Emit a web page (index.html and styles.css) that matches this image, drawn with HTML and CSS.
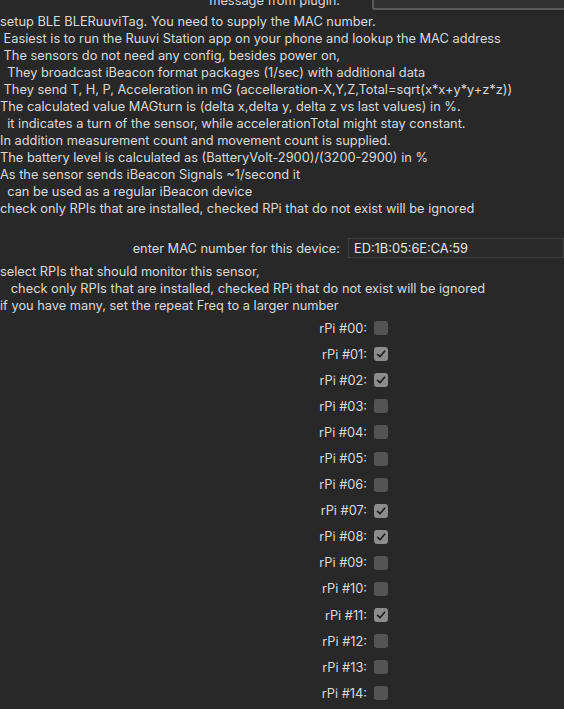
FILE: index.html
```html
<!DOCTYPE html>
<html lang="en">
<head>
    <meta charset="UTF-8">
    <title>BLERuuviTag</title>
    <link rel="stylesheet" href="styles.css">
</head>
<body>
    <div class="config">
        <div class="field top-field">
            <label class="field-label">message from plugin:</label>
            <input type="text" class="field-input">
        </div>

        <div class="notes">
<p>setup BLE BLERuuviTag. You need to supply the MAC number.</p>
<p> Easiest is to run the Ruuvi Station app on your phone and lookup the MAC address</p>
<p> The sensors do not need any config, besides power on,</p>
<p>  They broadcast iBeacon format packages (1/sec) with additional data</p>
<p> They send T, H, P, Acceleration in mG (accelleration-X,Y,Z,Total=sqrt(x*x+y*y+z*z))</p>
<p>The calculated value MAGturn is (delta x,delta y, delta z vs last values) in %.</p>
<p>  it indicates a turn of the sensor, while accelerationTotal might stay constant.</p>
<p>In addition measurement count and movement count is supplied.</p>
<p>The battery level is calculated as (BatteryVolt-2900)/(3200-2900) in %</p>
<p>As the sensor sends iBeacon Signals ~1/second it</p>
<p>  can be used as a regular iBeacon device</p>
<p>check only RPIs that are installed, checked RPi that do not exist will be ignored</p>
        </div>

        <div class="field mac-field">
            <label class="field-label">enter MAC number for this device:</label>
            <input type="text" class="field-input" value="ED:1B:05:6E:CA:59">
        </div>

        <div class="notes">
<p>select RPIs that should monitor this sensor,</p>
<p>   check only RPIs that are installed, checked RPi that do not exist will be ignored</p>
<p>if you have many, set the repeat Freq to a larger number</p>
        </div>

        <div class="rpi-list" id="rpi-list"></div>
    </div>

    <script>
        const checked = [1, 2, 7, 8, 11];
        const list = document.getElementById('rpi-list');

        for (let i = 0; i < 15; i++) {
            const num = String(i).padStart(2, '0');
            const row = document.createElement('div');
            row.className = 'rpi-row';
            row.innerHTML = `
                <span class="rpi-label">rPi #${num}:</span>
                <span class="box${checked.includes(i) ? ' on' : ''}">
                    <svg viewBox="0 0 14 14" width="14" height="14"><path d="M3.6 7.4 L6 9.8 L10.6 4.2" fill="none" stroke="#1c1c1c" stroke-width="1.6" stroke-linecap="round" stroke-linejoin="round"/></svg>
                </span>`;
            list.appendChild(row);
        }
    </script>
</body>
</html>
```

FILE: styles.css
```css
body {
    margin: 0;
    background-color: #282828;
    color: #dadada;
    font-family: Inter, "Liberation Sans", Arial, sans-serif;
    font-size: 12.8px;
    overflow: hidden;
}
.config {
    margin-top: -9px;
}
.notes p {
    margin: 0;
    line-height: 17px;
    white-space: pre;
}
.field {
    display: flex;
    align-items: center;
}
.field-label {
    width: 340px;
    text-align: right;
    padding-right: 8px;
    flex-shrink: 0;
}
.field-input {
    flex: 1;
    height: 20px;
    box-sizing: border-box;
    background: #2e2e2e;
    border: 1px solid #4a4a4a;
    color: #e6e6e6;
    font-family: inherit;
    font-size: 12.8px;
    padding: 0 5px;
    outline: none;
}
.top-field {
    height: 18px;
    margin-bottom: 4px;
}
.top-field .field-label {
    width: 340px;
    padding-right: 32px;
}
.top-field .field-input {
    border: 2px solid #5a5a5a;
    border-radius: 3px;
    background: #323232;
}
.mac-field {
    margin: 21px 0 5px;
}
.mac-field .field-input {
    border-color: #3e3e3e;
    background: #2a2a2a;
}
.rpi-list {
    padding-top: 1px;
}
.rpi-row {
    display: flex;
    align-items: center;
    height: 26.1px;
}
.rpi-label {
    width: 367px;
    text-align: right;
    padding-right: 7px;
}
.box {
    width: 14px;
    height: 14px;
    border-radius: 3px;
    background: #545454;
    display: flex;
}
.box svg {
    display: none;
}
.box.on {
    background: #8c8c8c;
}
.box.on svg {
    display: block;
}
```
